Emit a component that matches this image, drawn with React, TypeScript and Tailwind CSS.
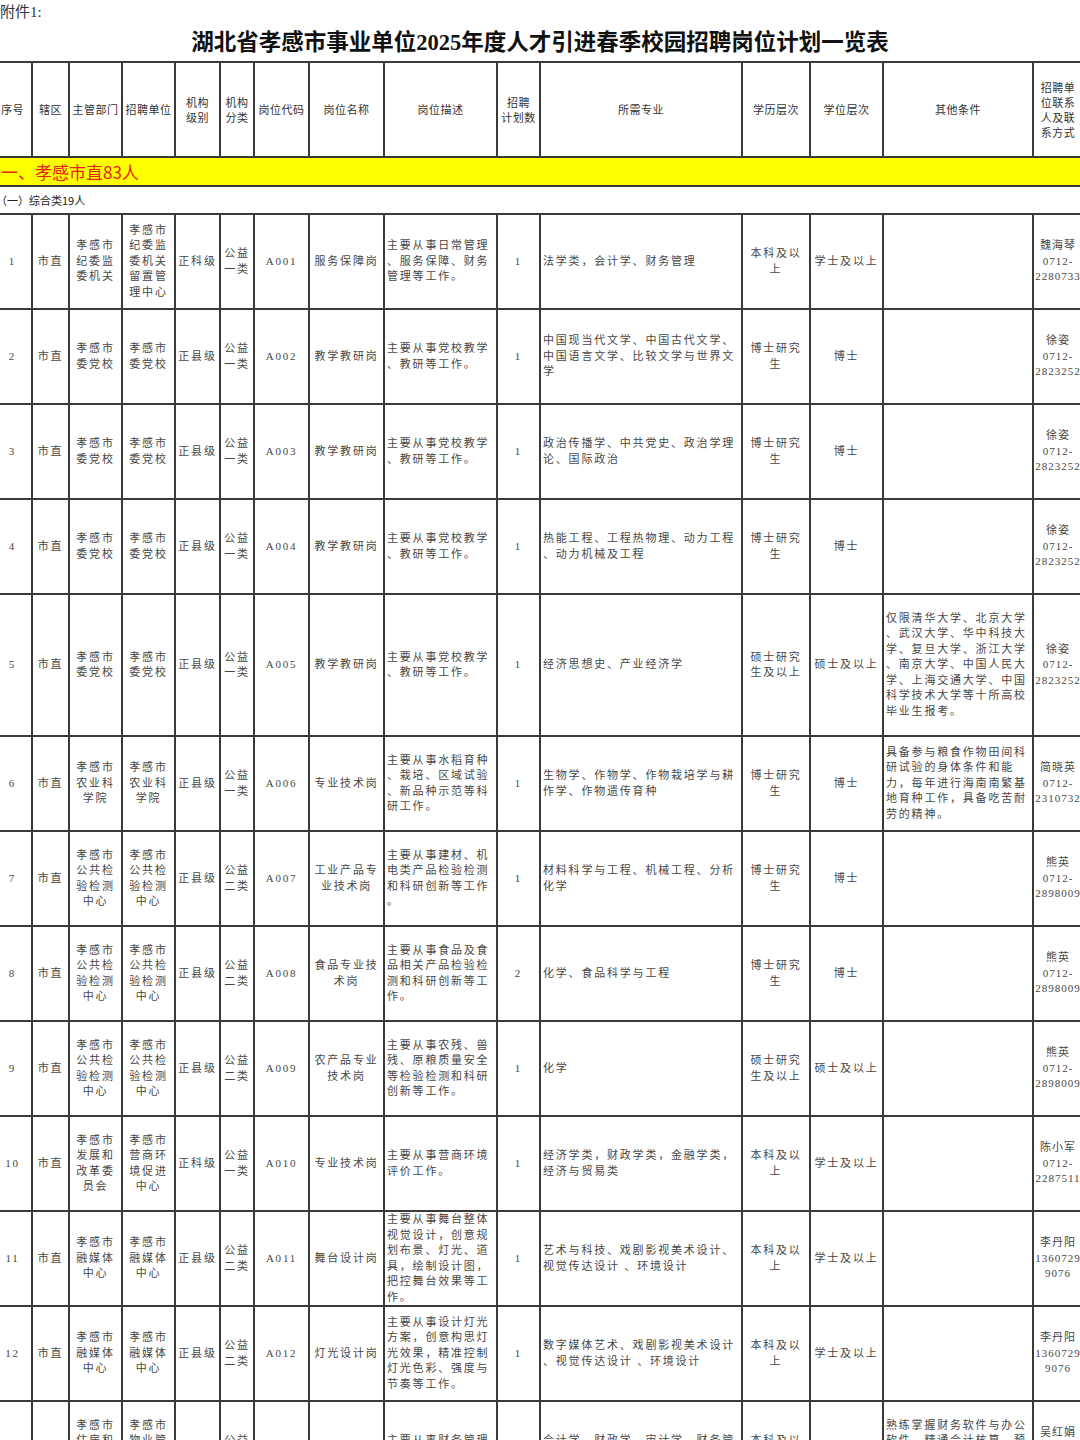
type Row = {
  no: string;
  dept: string;
  unit: string;
  level: string;
  kind: string;
  code: string;
  post: string;
  desc: string;
  count: string;
  major: string;
  edu: string;
  degree: string;
  other: string;
  name: string;
  phone: string;
  tall?: boolean;
};

const partyDesc = "主要从事党校教学、教研等工作。";
const testCenter = "孝感市公共检验检测中心";
const media = "孝感市融媒体中心";

const rows: Row[] = [
  {
    no: "1",
    dept: "孝感市纪委监委机关",
    unit: "孝感市纪委监委机关留置管理中心",
    level: "正科级",
    kind: "公益一类",
    code: "A001",
    post: "服务保障岗",
    desc: "主要从事日常管理、服务保障、财务管理等工作。",
    count: "1",
    major: "法学类，会计学、财务管理",
    edu: "本科及以上",
    degree: "学士及以上",
    other: "",
    name: "魏海琴",
    phone: "0712-2280733",
  },
  {
    no: "2",
    dept: "孝感市委党校",
    unit: "孝感市委党校",
    level: "正县级",
    kind: "公益一类",
    code: "A002",
    post: "教学教研岗",
    desc: partyDesc,
    count: "1",
    major: "中国现当代文学、中国古代文学、中国语言文学、比较文学与世界文学",
    edu: "博士研究生",
    degree: "博士",
    other: "",
    name: "徐姿",
    phone: "0712-2823252",
  },
  {
    no: "3",
    dept: "孝感市委党校",
    unit: "孝感市委党校",
    level: "正县级",
    kind: "公益一类",
    code: "A003",
    post: "教学教研岗",
    desc: partyDesc,
    count: "1",
    major: "政治传播学、中共党史、政治学理论、国际政治",
    edu: "博士研究生",
    degree: "博士",
    other: "",
    name: "徐姿",
    phone: "0712-2823252",
  },
  {
    no: "4",
    dept: "孝感市委党校",
    unit: "孝感市委党校",
    level: "正县级",
    kind: "公益一类",
    code: "A004",
    post: "教学教研岗",
    desc: partyDesc,
    count: "1",
    major: "热能工程、工程热物理、动力工程、动力机械及工程",
    edu: "博士研究生",
    degree: "博士",
    other: "",
    name: "徐姿",
    phone: "0712-2823252",
  },
  {
    no: "5",
    dept: "孝感市委党校",
    unit: "孝感市委党校",
    level: "正县级",
    kind: "公益一类",
    code: "A005",
    post: "教学教研岗",
    desc: partyDesc,
    count: "1",
    major: "经济思想史、产业经济学",
    edu: "硕士研究生及以上",
    degree: "硕士及以上",
    other:
      "仅限清华大学、北京大学、武汉大学、华中科技大学、复旦大学、浙江大学、南京大学、中国人民大学、上海交通大学、中国科学技术大学等十所高校毕业生报考。",
    name: "徐姿",
    phone: "0712-2823252",
    tall: true,
  },
  {
    no: "6",
    dept: "孝感市农业科学院",
    unit: "孝感市农业科学院",
    level: "正县级",
    kind: "公益一类",
    code: "A006",
    post: "专业技术岗",
    desc: "主要从事水稻育种、栽培、区域试验、新品种示范等科研工作。",
    count: "1",
    major: "生物学、作物学、作物栽培学与耕作学、作物遗传育种",
    edu: "博士研究生",
    degree: "博士",
    other: "具备参与粮食作物田间科研试验的身体条件和能\n力，每年进行海南南繁基地育种工作，具备吃苦耐劳的精神。",
    name: "简晓英",
    phone: "0712-2310732",
  },
  {
    no: "7",
    dept: testCenter,
    unit: testCenter,
    level: "正县级",
    kind: "公益二类",
    code: "A007",
    post: "工业产品专业技术岗",
    desc: "主要从事建材、机电类产品检验检测和科研创新等工作。",
    count: "1",
    major: "材料科学与工程、机械工程、分析化学",
    edu: "博士研究生",
    degree: "博士",
    other: "",
    name: "熊英",
    phone: "0712-2898009",
  },
  {
    no: "8",
    dept: testCenter,
    unit: testCenter,
    level: "正县级",
    kind: "公益二类",
    code: "A008",
    post: "食品专业技术岗",
    desc: "主要从事食品及食品相关产品检验检测和科研创新等工作。",
    count: "2",
    major: "化学、食品科学与工程",
    edu: "博士研究生",
    degree: "博士",
    other: "",
    name: "熊英",
    phone: "0712-2898009",
  },
  {
    no: "9",
    dept: testCenter,
    unit: testCenter,
    level: "正县级",
    kind: "公益二类",
    code: "A009",
    post: "农产品专业技术岗",
    desc: "主要从事农残、兽残、原粮质量安全等检验检测和科研创新等工作。",
    count: "1",
    major: "化学",
    edu: "硕士研究生及以上",
    degree: "硕士及以上",
    other: "",
    name: "熊英",
    phone: "0712-2898009",
  },
  {
    no: "10",
    dept: "孝感市发展和改革委员会",
    unit: "孝感市营商环境促进中心",
    level: "正科级",
    kind: "公益一类",
    code: "A010",
    post: "专业技术岗",
    desc: "主要从事营商环境评价工作。",
    count: "1",
    major: "经济学类，财政学类，金融学类，经济与贸易类",
    edu: "本科及以上",
    degree: "学士及以上",
    other: "",
    name: "陈小军",
    phone: "0712-2287511",
  },
  {
    no: "11",
    dept: media,
    unit: media,
    level: "正县级",
    kind: "公益二类",
    code: "A011",
    post: "舞台设计岗",
    desc: "主要从事舞台整体视觉设计，创意规划布景、灯光、道具，绘制设计图，把控舞台效果等工作。",
    count: "1",
    major: "艺术与科技、戏剧影视美术设计、视觉传达设计 、环境设计",
    edu: "本科及以上",
    degree: "学士及以上",
    other: "",
    name: "李丹阳",
    phone: "13607299076",
  },
  {
    no: "12",
    dept: media,
    unit: media,
    level: "正县级",
    kind: "公益二类",
    code: "A012",
    post: "灯光设计岗",
    desc: "主要从事设计灯光方案，创意构思灯光效果，精准控制灯光色彩、强度与节奏等工作。",
    count: "1",
    major: "数字媒体艺术、戏剧影视美术设计、视觉传达设计 、环境设计",
    edu: "本科及以上",
    degree: "学士及以上",
    other: "",
    name: "李丹阳",
    phone: "13607299076",
  },
  {
    no: "13",
    dept: "孝感市住房和城乡建设局",
    unit: "孝感市物业管理服务中心",
    level: "正科级",
    kind: "公益一类",
    code: "A013",
    post: "财务管理岗",
    desc: "主要从事财务管理等工作。",
    count: "1",
    major: "会计学、财政学、审计学、财务管理",
    edu: "本科及以上",
    degree: "学士及以上",
    other: "熟练掌握财务软件与办公软件，精通会计核算、预算管理等工作，具备良好的沟通能力。",
    name: "吴红娟",
    phone: "0712-2856301",
  },
];

const headers = [
  "序号",
  "辖区",
  "主管部门",
  "招聘单位",
  "机构\n级别",
  "机构\n分类",
  "岗位代码",
  "岗位名称",
  "岗位描述",
  "招聘\n计划数",
  "所需专业",
  "学历层次",
  "学位层次",
  "其他条件",
  "招聘单\n位联系\n人及联\n系方式",
];

const widths = [39, 37, 53, 53, 45, 34, 55, 75, 113, 43, 202, 68, 73, 150, 50];

const line = "border-2 border-[#3a3a3a]";
const base =
  "border-2 border-[#3a3a3a] py-0 align-middle text-[11px] leading-[15.5px] text-[#474747] [font-family:'Liberation_Serif','Noto_Sans_CJK_SC',serif]";
const td = `${base} px-[2px] text-center tracking-[1.8px] whitespace-pre-line [line-break:anywhere]`;
const left = `${base} px-[2px] text-left tracking-[1.8px] whitespace-pre-line [line-break:anywhere]`;
const contact = `${base} px-0 text-center tracking-[1px] [overflow-wrap:anywhere]`;

export default function App() {
  return (
    <div className="w-[1080px] h-[1440px] overflow-hidden bg-white text-[#222]">
      <div className="h-[24px] text-[15px] leading-[24px] text-[#333] [font-family:'Liberation_Serif','Noto_Sans_CJK_SC',serif]">
        附件1:
      </div>
      <h1 className="h-[37px] text-center text-[22.5px] font-bold leading-[37px] text-[#111] [font-family:'Liberation_Serif','Noto_Sans_CJK_SC',serif]">
        湖北省孝感市事业单位2025年度人才引进春季校园招聘岗位计划一览表
      </h1>

      <table className="ml-[-8px] w-[1090px] table-fixed border-collapse">
        <colgroup>
          {widths.map((w, i) => (
            <col key={i} style={{ width: w }} />
          ))}
        </colgroup>
        <thead>
          <tr>
            {headers.map((h) => (
              <th
                key={h}
                className={`${line} h-[95px] px-0 align-middle text-center text-[11px] font-normal leading-[15px] tracking-[0.5px] text-[#333] whitespace-pre-line [font-family:'Noto_Sans_CJK_SC',sans-serif]`}
              >
                {h}
              </th>
            ))}
          </tr>
        </thead>
        <tbody>
          <tr>
            <td
              colSpan={15}
              className={`${line} h-[29px] bg-[#ffff00] py-0 pl-[7px] text-[17px] leading-[24px] text-[#e8220f] [font-family:'Noto_Sans_CJK_SC',sans-serif]`}
            >
              一、孝感市直83人
            </td>
          </tr>
          <tr>
            <td
              colSpan={15}
              className={`${line} h-[28px] py-0 pl-[2px] text-[11px] leading-[16px] text-[#222] [font-family:'Noto_Sans_CJK_SC',sans-serif]`}
            >
              （一）综合类19人
            </td>
          </tr>

          {rows.map((r) => (
            <tr key={r.no} className={r.tall ? "h-[142px]" : "h-[95px]"}>
              <td className={`${td} tracking-[0.5px]`}>{r.no}</td>
              <td className={td}>市直</td>
              <td className={td}>{r.dept}</td>
              <td className={td}>{r.unit}</td>
              <td className={td}>{r.level}</td>
              <td className={td}>{r.kind}</td>
              <td className={`${td} tracking-[1.2px]`}>{r.code}</td>
              <td className={td}>{r.post}</td>
              <td className={left}>{r.desc}</td>
              <td className={td}>{r.count}</td>
              <td className={left}>{r.major}</td>
              <td className={td}>{r.edu}</td>
              <td className={td}>{r.degree}</td>
              <td className={left}>{r.other}</td>
              <td className={contact}>
                <div>{r.name}</div>
                <div>{r.phone}</div>
              </td>
            </tr>
          ))}
        </tbody>
      </table>
    </div>
  );
}
